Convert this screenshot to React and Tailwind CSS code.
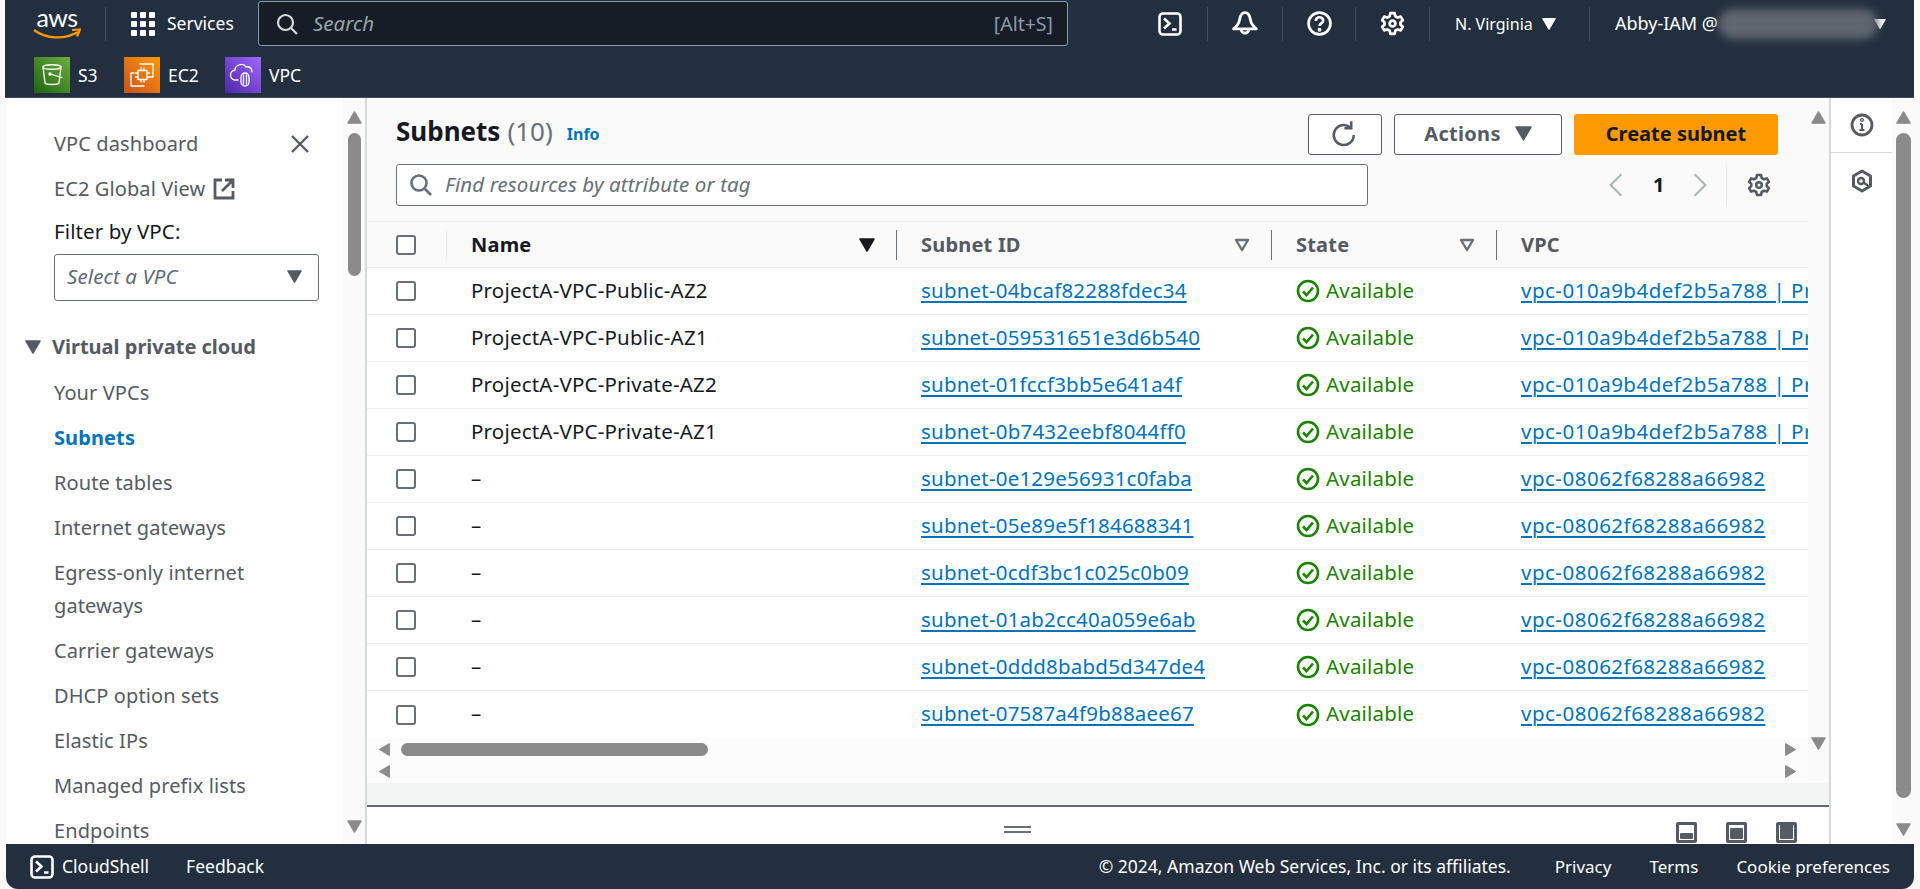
const font = { fontFamily: '"Noto Sans", sans-serif' };

const subnets = [
  ['ProjectA-VPC-Public-AZ2', 'subnet-04bcaf82288fdec34', 'vpc-010a9b4def2b5a788 | ProjectA-VPC'],
  ['ProjectA-VPC-Public-AZ1', 'subnet-059531651e3d6b540', 'vpc-010a9b4def2b5a788 | ProjectA-VPC'],
  ['ProjectA-VPC-Private-AZ2', 'subnet-01fccf3bb5e641a4f', 'vpc-010a9b4def2b5a788 | ProjectA-VPC'],
  ['ProjectA-VPC-Private-AZ1', 'subnet-0b7432eebf8044ff0', 'vpc-010a9b4def2b5a788 | ProjectA-VPC'],
  ['–', 'subnet-0e129e56931c0faba', 'vpc-08062f68288a66982'],
  ['–', 'subnet-05e89e5f184688341', 'vpc-08062f68288a66982'],
  ['–', 'subnet-0cdf3bc1c025c0b09', 'vpc-08062f68288a66982'],
  ['–', 'subnet-01ab2cc40a059e6ab', 'vpc-08062f68288a66982'],
  ['–', 'subnet-0ddd8babd5d347de4', 'vpc-08062f68288a66982'],
  ['–', 'subnet-07587a4f9b88aee67', 'vpc-08062f68288a66982'],
];

function Tri({ dir = 'down', size = 15, color = '#8b8b8b', className = '' }) {
  const pts = {
    down: '1,2 15,2 8,14',
    up: '1,14 15,14 8,2',
    left: '14,1 14,15 2,8',
    right: '2,1 2,15 14,8',
  };
  return (
    <svg width={size} height={size} viewBox="0 0 16 16" className={`shrink-0 ${className}`}>
      <polygon points={pts[dir]} fill={color} stroke={color} strokeWidth="1.5" strokeLinejoin="round" />
    </svg>
  );
}

function Gear({ size = 25, color = '#fff', sw = 2.6 }) {
  return (
    <svg width={size} height={size} viewBox="0 0 24 24" fill="none" stroke={color} strokeWidth={sw} strokeLinejoin="round" className="shrink-0">
      <path d="M10 2h4l.7 3 2.3 1.300 2.900-.9 2 3.400-2.200 2.100v2.200l2.200 2.100-2 3.400-2.900-.9-2.300 1.300-.7 3h-4l-.7-3L7 17.700l-2.900.9-2-3.400 2.200-2.100v-2.200L2.100 8.800l2-3.400 2.900.9 2.300-1.300z" />
      <circle cx="12" cy="12" r="2.800" />
    </svg>
  );
}

function TerminalIcon({ size = 24 }) {
  return (
    <svg width={size} height={size} viewBox="0 0 24 24" fill="none" stroke="#fff" strokeWidth="2.600" className="shrink-0">
      <rect x="1.500" y="1.500" width="21" height="21" rx="3.500" />
      <path d="M6 6.500l5.500 5L6 16.500M14 17.500h4.500" />
    </svg>
  );
}

function ServiceTile({ from, to, children }) {
  return (
    <div className={`flex h-9 w-9 items-center justify-center bg-gradient-to-tr ${from} ${to}`}>
      <svg width="30" height="30" viewBox="0 0 30 30" fill="none" stroke="#fff" strokeWidth="1.300" strokeLinecap="round" strokeLinejoin="round">
        {children}
      </svg>
    </div>
  );
}

function Divider() {
  return <div className="h-[34px] w-px bg-[#414d5c]" />;
}

function Header() {
  return (
    <header className="flex h-[98px] shrink-0 flex-col border-b border-[#414d5c] bg-[#232f3e] text-white">
      <div className="flex h-[47px] items-center">
        <div className="ml-[27px] flex w-[50px] flex-col items-center">
          <span className="h-[20px] text-[25px] leading-[19px] tracking-[-0.5px]" style={{ fontFamily: 'Lato, sans-serif' }}>aws</span>
          <svg width="48" height="12" viewBox="0 0 48 12" fill="none">
            <path d="M1 2c12 9 30 10 44 2" stroke="#ff9900" strokeWidth="2.200" />
            <path d="M39 2l8-.5-3 7" stroke="#ff9900" strokeWidth="2.200" />
          </svg>
        </div>
        <div className="ml-[23px]"><Divider /></div>
        <div className="ml-[25px] grid h-6 w-6 shrink-0 grid-cols-3 gap-[3px]">
          {[0, 1, 2, 3, 4, 5, 6, 7, 8].map((i) => (
            <span key={i} className="rounded-[1px] bg-white" />
          ))}
        </div>
        <span className="ml-[12px] w-[67px] text-[17.5px]">Services</span>
        <div className="ml-[24px] flex h-[45px] w-[810px] items-center rounded-[3px] border border-[#8d99a8] bg-[#161d26] pl-[17px] pr-[14px]">
          <svg width="22" height="22" viewBox="0 0 22 22" fill="none" stroke="#d5dbdb" strokeWidth="2.200">
            <circle cx="9.500" cy="9.500" r="7.500" />
            <path d="M15 15l6 6" />
          </svg>
          <span className="ml-[15px] grow text-[20.5px] italic text-[#95a5a6]">Search</span>
          <span className="text-[19.5px] text-[#8d99a8]">[Alt+S]</span>
        </div>
        <div className="ml-[90px]"><TerminalIcon /></div>
        <div className="ml-[25px]"><Divider /></div>
        <svg className="ml-[24px] shrink-0" width="26" height="26" viewBox="0 0 24 24" fill="none" stroke="#fff" strokeWidth="2.600" strokeLinejoin="round">
          <path d="M12 1.500C8.500 1.500 7.500 5 7 8c-.5 3-2.500 6-5.500 8.500h21C19.500 14 17.500 11 17 8c-.5-3-1.500-6.500-5-6.500z" />
          <path d="M8.500 17a3.500 3.500 0 007 0" />
        </svg>
        <div className="ml-[24px]"><Divider /></div>
        <svg className="ml-[24px] shrink-0" width="25" height="25" viewBox="0 0 24 24" fill="none" stroke="#fff" strokeWidth="2.600">
          <circle cx="12" cy="12" r="10.500" />
          <path d="M8.500 9.500a3.500 3.500 0 117 0c0 2-3.500 2.500-3.500 5" />
          <circle cx="12" cy="18" r="0.600" fill="#fff" />
        </svg>
        <div className="ml-[23px]"><Divider /></div>
        <div className="ml-[24px]"><Gear /></div>
        <div className="ml-[24px]"><Divider /></div>
        <span className="ml-[25px] w-[77px] whitespace-nowrap text-[16px]">N. Virginia</span>
        <Tri size={14} color="#fff" className="ml-[10px]" />
        <div className="ml-[33px]"><Divider /></div>
        <span className="ml-[25px] whitespace-nowrap text-[18px]">Abby-IAM @</span>
        <div className="h-[30px] w-[160px] shrink-0 rounded-full bg-[#5f666f] blur-[4px]" />
        <Tri size={12} color="#fff" className="-ml-[4px]" />
      </div>
      <div className="mt-[10px] flex items-center text-[17.5px]">
        <div className="ml-[29px]">
          <ServiceTile from="from-[#1b660f]" to="to-[#6cae3e]">
            <path d="M6 7c0-3 18-3 18 0l-2 16c-.5 2-13.500 2-14 0z" />
            <path d="M6 7c0 3 18 3 18 0M13 14l12 3.500" />
            <circle cx="13" cy="14" r="1" />
          </ServiceTile>
        </div>
        <span className="ml-[8px] w-[46px]">S3</span>
        <ServiceTile from="from-[#c8511b]" to="to-[#ff9900]">
          <rect x="11" y="10.500" width="9" height="9" />
          <path d="M13 4h13v13h-3M17 26H4V13h3M14 10.500V8M17 10.500V8M14 22v-2.500M17 22v-2.500M8.500 13H11M8.500 17H11M20 13h2.500M20 17h2.500" />
        </ServiceTile>
        <span className="ml-[8px] w-[57px]">EC2</span>
        <ServiceTile from="from-[#4d27a8]" to="to-[#a166ff]">
          <path d="M10 20H8a5 5 0 01-1-10c0-5 8-8 11-3 3-1 6 1 6 5" />
          <rect x="13" y="13" width="8" height="13" rx="4" />
          <path d="M15.500 15v9M18.500 15v9" />
        </ServiceTile>
        <span className="ml-[8px]">VPC</span>
      </div>
    </header>
  );
}

function NavRow({ children, className = 'text-[#545b64]' }) {
  return <div className={`flex h-[45px] items-center justify-between ${className}`}>{children}</div>;
}

function Sidebar() {
  return (
    <aside className="ml-px flex w-[361px] shrink-0 border-r-2 border-[#d5dbdb] bg-white">
      <nav className="w-[337px] shrink-0 overflow-hidden pl-[48px] pr-[33px] pt-[23px] text-[20px] tracking-[0.1px]">
        <NavRow>
          VPC dashboard
          <svg width="20" height="20" viewBox="0 0 20 20" stroke="#545b64" strokeWidth="2.400">
            <path d="M2 2l16 16M18 2L2 18" />
          </svg>
        </NavRow>
        <NavRow className="justify-start text-[#545b64]">
          EC2 Global View
          <svg className="ml-[8px]" width="22" height="22" viewBox="0 0 22 22" fill="none" stroke="#545b64" strokeWidth="2.800">
            <path d="M9 2H2v18h18v-7M12 2h8v8M20 2L9 13" />
          </svg>
        </NavRow>
        <div className="mt-[3px] flex h-[34px] items-center text-[20.5px] text-[#16191f]">Filter by VPC:</div>
        <div className="mt-[6px] flex h-[47px] w-[265px] items-center justify-between rounded-[3px] border border-[#687078] pb-[2px] pl-[12px] pr-[16px] text-[20.5px] italic text-[#5f6b7a]">
          Select a VPC
          <Tri color="#545b64" />
        </div>
        <div className="-ml-[29px] mt-[24px] flex h-[45px] items-center pb-[2px] font-bold tracking-normal text-[#545b64]">
          <Tri color="#545b64" size={16} />
          <span className="ml-[11px]">Virtual private cloud</span>
        </div>
        <NavRow>Your VPCs</NavRow>
        <NavRow className="font-bold text-[#0073bb]">Subnets</NavRow>
        <NavRow>Route tables</NavRow>
        <NavRow>Internet gateways</NavRow>
        <div className="flex h-[78px] items-center leading-[33px] text-[#545b64]">Egress-only internet<br />gateways</div>
        <NavRow>Carrier gateways</NavRow>
        <NavRow>DHCP option sets</NavRow>
        <NavRow>Elastic IPs</NavRow>
        <NavRow>Managed prefix lists</NavRow>
        <NavRow>Endpoints</NavRow>
      </nav>
      <div className="flex w-[22px] flex-col items-center bg-[#fafafa] pt-[12px]">
        <Tri dir="up" />
        <div className="mt-[8px] h-[143px] w-[13px] rounded-full bg-[#8b8b8b]" />
        <div className="grow" />
        <Tri className="mb-[10px]" />
      </div>
    </aside>
  );
}

function Checkbox() {
  return <div className="h-5 w-5 rounded-[3px] border-2 border-[#687078] bg-white" />;
}

function HeadCell({ width, label, caret, dark }) {
  return (
    <div className={`flex h-[30px] shrink-0 items-center pl-[24px] pr-[21px] text-[20px] font-bold ${width} ${dark ? 'text-[#16191f]' : 'text-[#545b64]'}`}>
      <span className="grow">{label}</span>
      {caret}
    </div>
  );
}

function Table() {
  const outline = (
    <svg width="16" height="16" viewBox="0 0 16 16" fill="none" stroke="#687078" strokeWidth="2.400">
      <polygon points="2,3 14,3 8,13" strokeLinejoin="round" />
    </svg>
  );
  return (
    <div className="w-[1441px] overflow-hidden text-[20.5px] tracking-[0.2px]">
      <div className="flex h-[47px] w-[1900px] items-center border-y border-[#eaeded] pl-[29px]">
        <div className="flex h-[30px] w-[51px] shrink-0 items-center border-r border-[#eaeded]"><Checkbox /></div>
        <HeadCell width="w-[450px] border-r border-[#687078]" label="Name" dark caret={<Tri size={16} color="#16191f" />} />
        <HeadCell width="w-[375px] border-r border-[#687078]" label="Subnet ID" caret={outline} />
        <HeadCell width="w-[225px] border-r border-[#687078]" label="State" caret={outline} />
        <HeadCell width="w-[400px]" label="VPC" />
      </div>
      {subnets.map(([name, id, vpc]) => (
        <div key={id} className="flex h-[47px] w-[1900px] items-center border-b border-[#eaeded] bg-white pl-[29px] last:border-b-0">
          <div className="w-[51px] shrink-0"><Checkbox /></div>
          <div className="w-[450px] shrink-0 pb-[2px] pl-[24px] text-[#16191f]">{name}</div>
          <div className="w-[375px] shrink-0 pb-[2px] pl-[24px]">
            <a className="text-[#0073bb] underline decoration-2 underline-offset-[3px]">{id}</a>
          </div>
          <div className="flex w-[225px] shrink-0 items-center gap-[6px] pl-[24px] text-[#1d8102]">
            <svg width="24" height="24" viewBox="0 0 24 24" fill="none" stroke="#1d8102" strokeWidth="2.600">
              <circle cx="12" cy="12" r="10" />
              <path d="M7 12.500l3.500 3.500L17 8.500" />
            </svg>
            <span className="pb-[2px]">Available</span>
          </div>
          <div className="w-[400px] shrink-0 whitespace-nowrap pb-[2px] pl-[24px]">
            <a className="tracking-[0.5px] text-[#0073bb] underline decoration-2 underline-offset-[3px]">{vpc}</a>
          </div>
        </div>
      ))}
    </div>
  );
}

function HScrollRow({ thumb }) {
  return (
    <div className="flex h-[22px] items-center pl-[11px] pr-[11px]">
      <Tri dir="left" size={13} />
      {thumb ? <div className="ml-[10px] h-[13px] w-[307px] rounded-full bg-[#8b8b8b]" /> : null}
      <div className="grow" />
      <Tri dir="right" size={13} />
    </div>
  );
}

function Main() {
  return (
    <main className="flex min-w-0 grow flex-col border-r-2 border-[#d5dbdb] bg-[#fafafa]">
      <div className="flex h-[685px] shrink-0">
        <div className="flex w-[1441px] shrink-0 flex-col">
          <div className="flex h-[57px] items-start pl-[29px] pr-[30px] pt-[16px]">
            <h1 className="mt-[2px] text-[26px] font-bold leading-[30px] text-[#16191f]">Subnets</h1>
            <span className="ml-[7px] mt-[2px] text-[26px] leading-[30px] text-[#687078]">(10)</span>
            <span className="ml-[14px] mt-[5px] text-[16px] font-bold leading-[30px] text-[#0073bb]">Info</span>
            <div className="grow" />
            <button className="flex h-[41px] w-[74px] items-center justify-center rounded-[3px] border border-[#545b64] bg-white">
              <svg width="30" height="30" viewBox="0 0 24 24" fill="none" stroke="#545b64" strokeWidth="2">
                <path d="M19 12a8 8 0 11-3-6.200" />
                <path d="M17 1v5.500h-5.500" />
              </svg>
            </button>
            <button className="ml-[12px] flex h-[41px] w-[168px] items-center justify-center gap-[14px] rounded-[3px] border border-[#545b64] bg-white pb-[2px] text-[20px] font-bold tracking-[0.3px] text-[#545b64]">
              Actions
              <Tri color="#545b64" size={17} />
            </button>
            <button className="ml-[12px] h-[41px] w-[204px] rounded-[3px] bg-[#ff9900] pb-[2px] text-[20px] font-bold text-[#16191f]">Create subnet</button>
          </div>
          <div className="mt-[9px] flex h-[42px] pl-[29px] pr-[37px]">
            <div className="flex w-[972px] items-center rounded-[3px] border border-[#687078] bg-white pl-[12px]">
              <svg width="24" height="24" viewBox="0 0 24 24" fill="none" stroke="#687078" strokeWidth="2.600">
                <circle cx="10" cy="10" r="7.500" />
                <path d="M16 16l6 6" />
              </svg>
              <span className="ml-[12px] whitespace-nowrap pb-[2px] text-[20.5px] tracking-[0.1px] italic text-[#687078]">Find resources by attribute or tag</span>
            </div>
            <div className="grow" />
            <div className="flex items-center">
              <svg width="16" height="26" viewBox="0 0 18 28" fill="none" stroke="#aab7b8" strokeWidth="2.400"><path d="M15 2L3 14l12 12" /></svg>
              <span className="ml-[29px] w-[12px] text-[20px] font-bold text-[#16191f]">1</span>
              <svg className="ml-[27px]" width="16" height="26" viewBox="0 0 18 28" fill="none" stroke="#aab7b8" strokeWidth="2.400"><path d="M3 2l12 12L3 26" /></svg>
              <div className="ml-[18px] h-[42px] w-px bg-[#eaeded]" />
              <div className="ml-[20px]"><Gear size={24} color="#545b64" /></div>
            </div>
          </div>
          <div className="mt-[15px]"><Table /></div>
          <div className="grow bg-[#fcfcfc]">
            <HScrollRow thumb />
            <HScrollRow />
          </div>
        </div>
        <div className="flex grow flex-col items-center pt-[12px]">
          <Tri dir="up" />
          <Tri className="mt-[611px]" />
        </div>
      </div>
      <div className="h-[22px] shrink-0 bg-[#f2f3f3]" />
      <div className="flex h-[39px] shrink-0 flex-col border-t-2 border-[#5f6b7a] bg-white">
        <div className="flex h-[37px] items-center">
          <div className="ml-[637px] mt-[8px] flex w-[27px] flex-col gap-[3px]">
            <span className="h-[2px] bg-[#687078]" />
            <span className="h-[2px] bg-[#687078]" />
          </div>
          <div className="ml-[645px] mt-[14px] flex gap-[29px]">
            {['h-[6px]', 'h-[11px]', 'h-[15px]'].map((h) => (
              <div key={h} className="flex h-[21px] w-[21px] items-end rounded-[2px] border-[3px] border-[#545b64] p-[1px]">
                <div className={`w-full rounded-[1px] bg-[#545b64] ${h}`} />
              </div>
            ))}
          </div>
        </div>
      </div>
    </main>
  );
}

function ToolsRail() {
  return (
    <div className="flex w-[83px] shrink-0 bg-white">
      <div className="flex w-[61px] shrink-0 flex-col items-center">
        <div className="flex h-[55px] w-full items-start justify-center border-b border-[#d5dbdb] pt-[15px]">
          <svg width="24" height="24" viewBox="0 0 24 24" fill="none" stroke="#545b64" strokeWidth="2.800">
            <circle cx="12" cy="12" r="10" />
            <path d="M12 11v6M9.500 17h5M10 11h2" strokeWidth="2.200" />
            <circle cx="12" cy="7" r="0.600" />
          </svg>
        </div>
        <svg className="mt-[16px]" width="22" height="24" viewBox="0 0 22 24" fill="none" stroke="#545b64" strokeWidth="3" strokeLinejoin="round">
          <path d="M11 2l8.500 5v10L11 22l-8.500-5V7z" />
          <circle cx="10" cy="12" r="3" strokeWidth="2.400" />
          <path d="M12.500 13.500l5 3.500" strokeWidth="2.400" />
        </svg>
      </div>
      <div className="flex w-[22px] flex-col items-center bg-[#fafafa] pt-[12px]">
        <Tri dir="up" />
        <div className="mt-[8px] h-[665px] w-[15px] rounded-full bg-[#8b8b8b]" />
        <Tri className="mt-[24px]" />
      </div>
    </div>
  );
}

function Footer() {
  return (
    <footer className="ml-px flex h-[45px] shrink-0 items-center rounded-b-[12px] bg-[#232f3e] pl-[24px] pr-[24px] text-[17.5px] text-white">
      <TerminalIcon />
      <span className="ml-[8px]">CloudShell</span>
      <span className="ml-[37px]">Feedback</span>
      <div className="grow" />
      <span>© 2024, Amazon Web Services, Inc. or its affiliates.</span>
      <span className="ml-[44px] text-[17px]">Privacy</span>
      <span className="ml-[38px] text-[17px]">Terms</span>
      <span className="ml-[38px] text-[17px]">Cookie preferences</span>
    </footer>
  );
}

export default function App() {
  return (
    <div className="flex h-[889px] w-[1920px] flex-col overflow-hidden bg-[#fafafa] pl-[5px] pr-[6px]" style={font}>
      <Header />
      <div className="flex h-[746px] shrink-0">
        <Sidebar />
        <Main />
        <ToolsRail />
      </div>
      <Footer />
    </div>
  );
}
